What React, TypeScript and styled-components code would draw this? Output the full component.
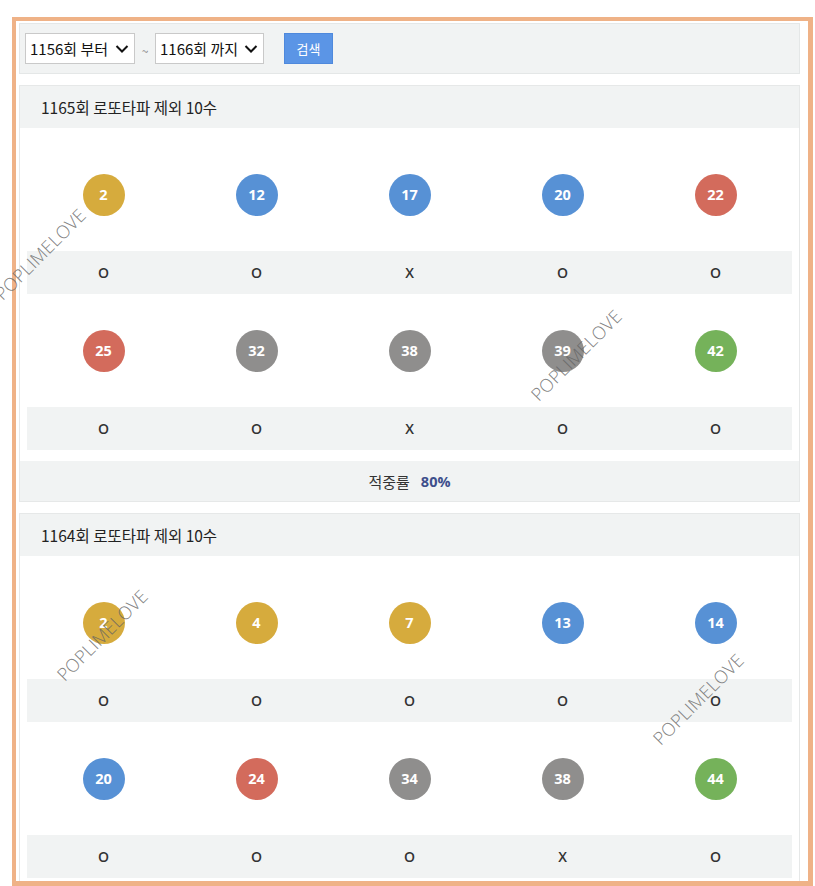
import React from "react";
import styled, { createGlobalStyle } from "styled-components";

const GlobalStyle = createGlobalStyle`
  html, body {
    margin: 0;
    padding: 0;
    background: #fff;
    height: 886px;
    overflow: hidden;
  }
  body {
    font-family: "Noto Sans CJK KR", "Noto Sans", sans-serif;
    color: #222;
  }
`;

type Draw = {
  round: number;
  balls: number[];
  hits: string;
  rate: number;
};

const draws: Draw[] = [
  {
    round: 1165,
    balls: [2, 12, 17, 20, 22, 25, 32, 38, 39, 42],
    hits: "OOXOOOOXOO",
    rate: 80,
  },
  {
    round: 1164,
    balls: [2, 4, 7, 13, 14, 20, 24, 34, 38, 44],
    hits: "OOOOOOOOXO",
    rate: 90,
  },
];

const ballColor = (n: number) => {
  if (n <= 10) return "#d6ab3d";
  if (n <= 20) return "#5791d5";
  if (n <= 30) return "#d36b5c";
  if (n <= 40) return "#8f8e8d";
  return "#75b25a";
};

// watermark centres, in page pixels
const marks = [
  { x: 40, y: 254 },
  { x: 576, y: 355 },
  { x: 102, y: 635 },
  { x: 698, y: 699 },
];

const Page = styled.div`
  position: relative;
  padding-top: 17px;
  padding-left: 12px;
  height: 869px;
`;

const Frame = styled.div`
  width: 801px;
  height: 869px;
  box-sizing: border-box;
  border: 4px solid #efb287;
  border-right-width: 5px;
  border-bottom-width: 5px;
  padding: 2px 8px 0 3px;
  overflow: hidden;
  display: flex;
  flex-direction: column;
  gap: 11px;
`;

const Toolbar = styled.div`
  flex: none;
  height: 51px;
  box-sizing: border-box;
  background: #f1f3f3;
  border: 1px solid #e4e7e7;
  display: flex;
  align-items: center;
  padding: 0 5px;
`;

const SelectBox = styled.label<{ $w: number }>`
  width: ${({ $w }) => $w}px;
  height: 31px;
  box-sizing: border-box;
  background: #fff;
  border: 1px solid #c9c9c9;
  display: flex;
  align-items: center;
  justify-content: space-between;
  padding: 0 5px 0 4px;
  font-size: 15px;
  color: #111;
`;

const Select = styled.select`
  appearance: none;
  border: none;
  background: transparent;
  font: inherit;
  color: inherit;
  padding: 0;
  outline: none;
`;

const Tilde = styled.span`
  width: 20px;
  text-align: center;
  font-size: 12px;
  color: #888;
  padding-top: 4px;
`;

const SearchButton = styled.button`
  margin-left: 20px;
  width: 49px;
  height: 31px;
  background: #5b95e6;
  border: 1px solid #4f89dc;
  color: #fff;
  font-family: "Noto Sans CJK KR", sans-serif;
  font-size: 13px;
  padding: 0;
`;

const Card = styled.div`
  flex: none;
  border: 1px solid #e6e8e8;
  background: #fff;
`;

const CardHeader = styled.div`
  height: 42px;
  background: #f1f3f3;
  display: flex;
  align-items: center;
  padding-left: 21px;
  font-size: 15.5px;
  color: #222;
`;

const CardBody = styled.div`
  padding: 10px 7px 11px;
`;

const Grid = styled.div<{ $h: number; $bg?: string }>`
  display: grid;
  grid-template-columns: repeat(5, 1fr);
  align-items: center;
  justify-items: center;
  height: ${({ $h }) => $h}px;
  background: ${({ $bg }) => $bg || "transparent"};
`;

const Ball = styled.div<{ $c: string }>`
  width: 42px;
  height: 42px;
  border-radius: 50%;
  background: ${({ $c }) => $c};
  color: #fff;
  font-family: "Open Sans", sans-serif;
  font-weight: 700;
  font-size: 14.5px;
  display: flex;
  align-items: center;
  justify-content: center;
`;

const Mark = styled.span`
  font-family: "Open Sans", sans-serif;
  font-weight: 600;
  font-size: 14px;
  color: #333;
`;

const RateRow = styled.div`
  height: 40px;
  background: #f1f3f3;
  display: flex;
  align-items: center;
  justify-content: center;
  gap: 11px;
  font-size: 15px;
  color: #333;
`;

const Rate = styled.span`
  font-family: "Open Sans", sans-serif;
  font-weight: 700;
  font-size: 14.5px;
  color: #3e4f8c;
`;

const Watermark = styled.div`
  position: absolute;
  transform: translate(-50%, -50%) rotate(-45deg);
  font-family: "Open Sans", sans-serif;
  font-weight: 300;
  font-size: 18px;
  letter-spacing: 0.2px;
  color: rgba(100, 100, 100, 0.8);
  white-space: nowrap;
  pointer-events: none;
`;

const Chevron = () => (
  <svg width="14" height="10" viewBox="0 0 14 10">
    <path d="M1.5 2 L7 7.5 L12.5 2" fill="none" stroke="#111" strokeWidth="2" />
  </svg>
);

function DrawCard({ draw }: { draw: Draw }) {
  const rows = [draw.balls.slice(0, 5), draw.balls.slice(5, 10)];
  return (
    <Card>
      <CardHeader>{draw.round}회 로또타파 제외 10수</CardHeader>
      <CardBody>
        {rows.map((row, r) => (
          <React.Fragment key={r}>
            <Grid $h={113}>
              {row.map((n) => (
                <Ball key={n} $c={ballColor(n)}>
                  {n}
                </Ball>
              ))}
            </Grid>
            <Grid $h={43} $bg="#f1f3f3">
              {row.map((n, i) => (
                <Mark key={n}>{draw.hits[r * 5 + i]}</Mark>
              ))}
            </Grid>
          </React.Fragment>
        ))}
      </CardBody>
      <RateRow>
        적중률 <Rate>{draw.rate}%</Rate>
      </RateRow>
    </Card>
  );
}

export default function App() {
  return (
    <Page>
      <GlobalStyle />
      <Frame>
        <Toolbar>
          <SelectBox $w={110}>
            <Select defaultValue="1156">
              <option value="1156">1156회 부터</option>
            </Select>
            <Chevron />
          </SelectBox>
          <Tilde>~</Tilde>
          <SelectBox $w={109}>
            <Select defaultValue="1166">
              <option value="1166">1166회 까지</option>
            </Select>
            <Chevron />
          </SelectBox>
          <SearchButton>검색</SearchButton>
        </Toolbar>
        {draws.map((d) => (
          <DrawCard key={d.round} draw={d} />
        ))}
      </Frame>
      {marks.map((m, i) => (
        <Watermark key={i} style={{ left: m.x, top: m.y }}>
          POPLIMELOVE
        </Watermark>
      ))}
    </Page>
  );
}
